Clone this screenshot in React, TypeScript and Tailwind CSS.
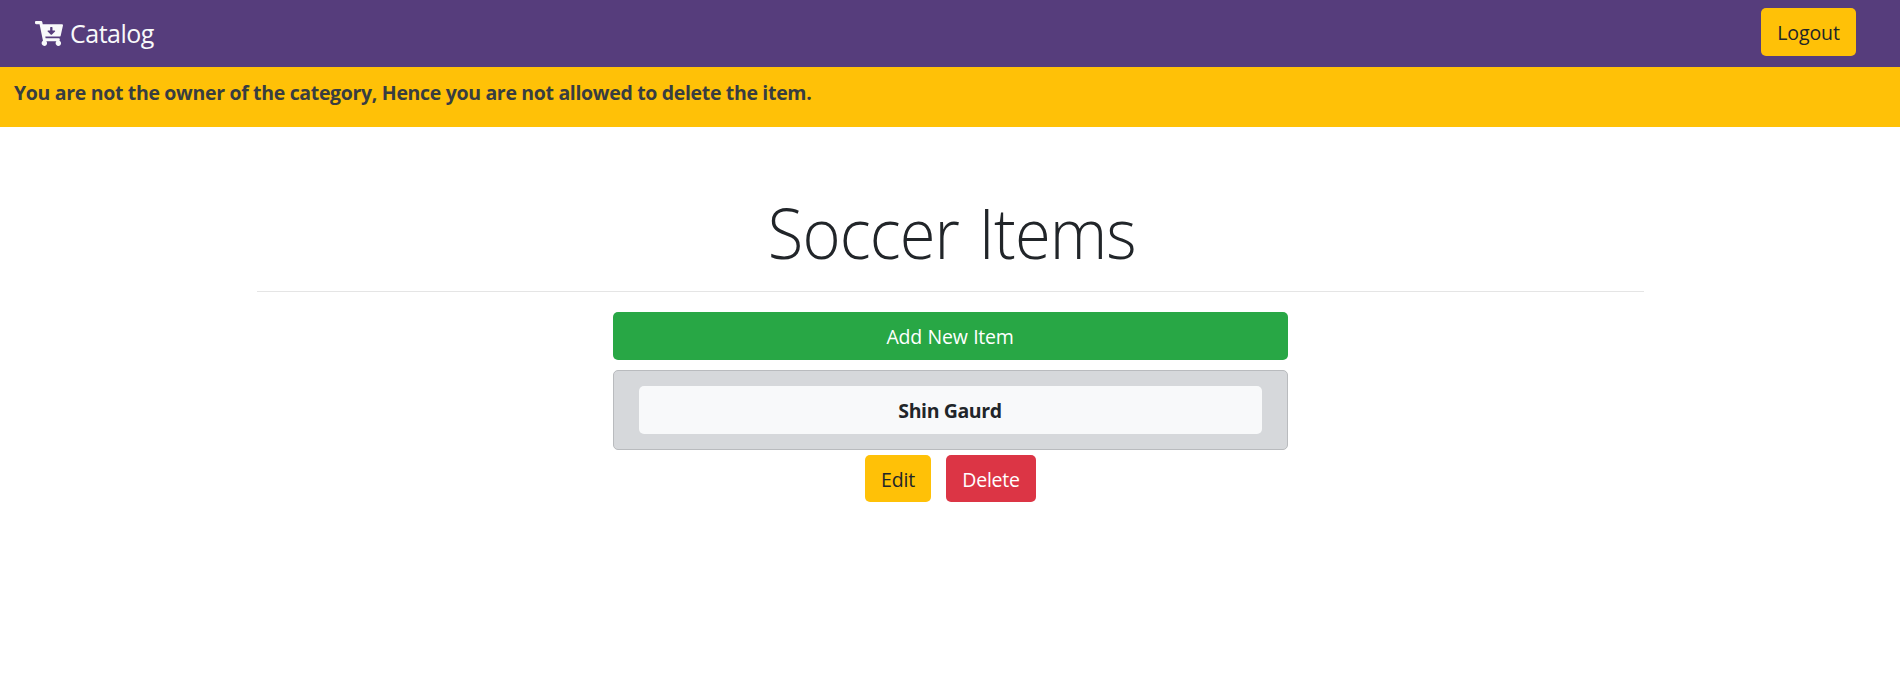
import { FaCartArrowDown } from "react-icons/fa";

const button = "flex items-center justify-center rounded-[5px] pt-0.5 text-[19.5px] leading-[30px]";

export default function App() {
  return (
    <div className="min-h-[681px] bg-white font-['Open_Sans','Noto_Sans',sans-serif] text-[#212529]">
      <nav className="flex h-[67px] items-center justify-between bg-[#563d7c] pl-[35px] pr-[44px]">
        <a href="#" className="flex items-center gap-[7px] text-[25px] leading-[37px] text-[#f8f9fa]">
          <FaCartArrowDown className="h-[25px] w-[28px]" />
          <span className="pb-px tracking-[-0.5px]">Catalog</span>
        </a>
        <button className={`${button} mb-[3px] h-12 w-[95px] bg-[#ffc107]`}>
          <span className="tracking-[-0.1px]">Logout</span>
        </button>
      </nav>
      <div className="h-[60px] bg-[#ffc107] pl-[14px] pt-[11px] text-[19.5px] font-bold leading-[30px] text-[#383d41]">
        <span className="tracking-[-0.33px]">You are not the owner of the category, Hence you are not allowed to delete the item.</span>
      </div>
      <main className="mx-auto flex w-[1387px] flex-col items-center pt-[55px]">
        <h1 className="mb-[9px] flex h-[100px] w-full items-center justify-center pl-[3px] text-[70px] font-light leading-[84px]">
          <span className="scale-x-[0.93] tracking-[-1px] [word-spacing:4px]">Soccer Items</span>
        </h1>
        <hr className="h-px w-full border-0 bg-[#e5e5e5]" />
        <div className="mt-5 flex w-[675px] flex-col">
          <button className={`${button} h-12 bg-[#28a745] text-white`}>
            <span className="tracking-[-0.3px] [word-spacing:1px]">Add New Item</span>
          </button>
          <div className="mt-[10px] h-20 rounded-[5px] border border-[#b9bbbe] bg-[#d6d8db] px-[25px] py-[15px]">
            <button className={`${button} h-12 w-full bg-[#f8f9fa] font-bold`}>
              <span className="tracking-[-0.4px]">Shin Gaurd</span>
            </button>
          </div>
          <div className="mt-[5px] flex justify-center gap-[15px]">
            <button className={`${button} h-[47px] w-[66px] bg-[#ffc107]`}>
              <span className="pl-px tracking-[-0.2px]">Edit</span>
            </button>
            <button className={`${button} h-[47px] w-[90px] bg-[#dc3545] text-white`}>
              <span className="pl-px tracking-[-0.25px]">Delete</span>
            </button>
          </div>
        </div>
      </main>
    </div>
  );
}
